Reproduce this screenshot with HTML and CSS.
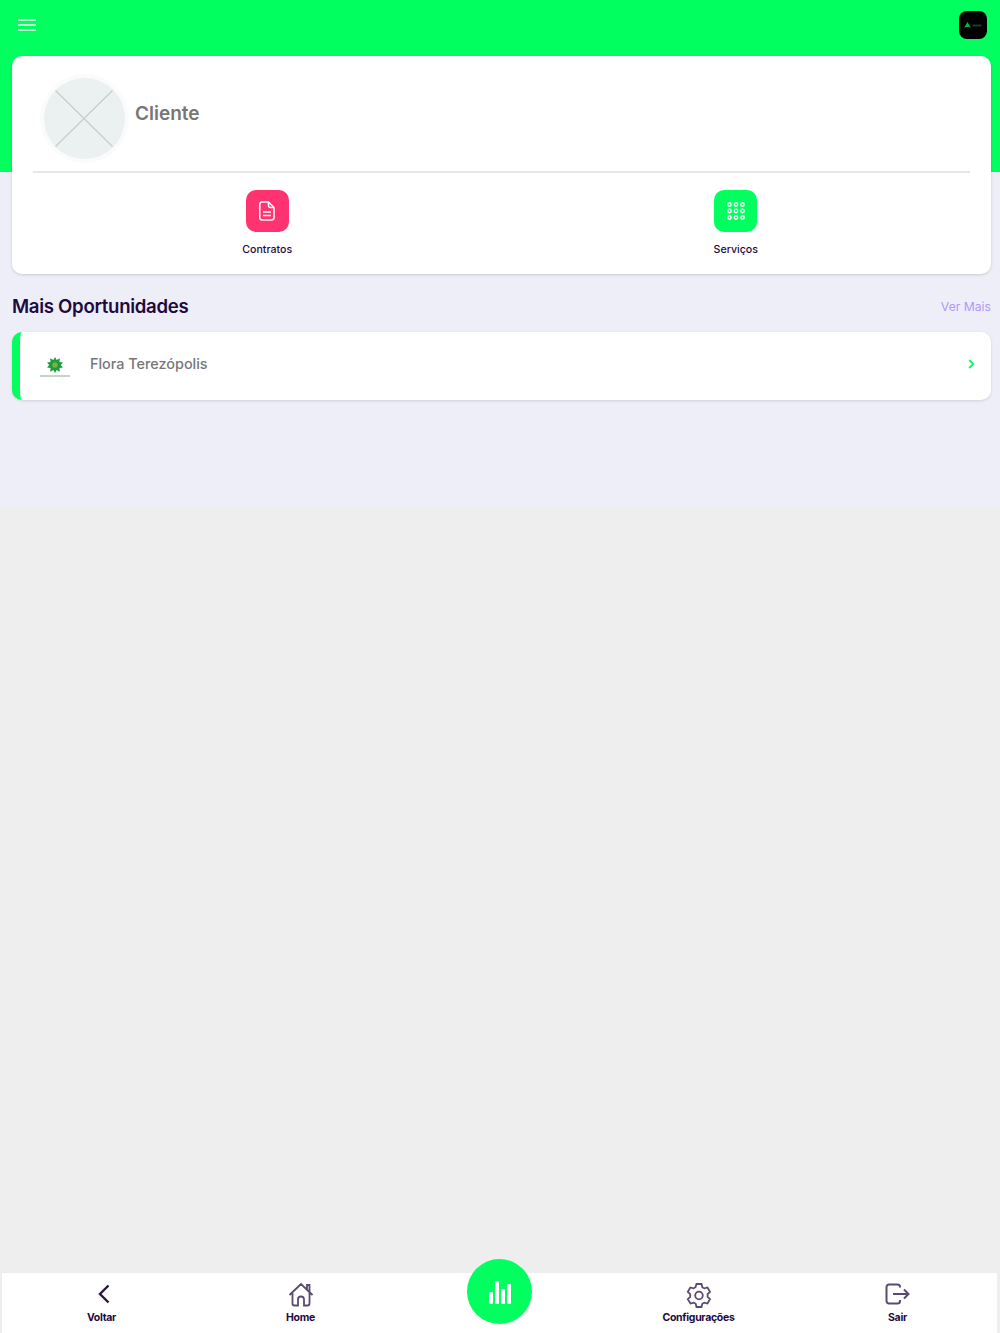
FILE: index.html
```html
<!DOCTYPE html>
<html lang="pt-BR">
<head>
  <meta charset="UTF-8">
  <meta name="viewport" content="width=device-width, initial-scale=1.0">
  <title>Cliente</title>
  <link rel="stylesheet" href="styles.css">
</head>
<body>
  <div class="app">
    <div class="content">
      <header class="topbar">
        <svg class="menu-icon" width="18" height="12" viewBox="0 0 18 12">
          <path d="M0 1h18M0 6h18M0 11h18" stroke="#fff" stroke-width="1.6" fill="none"/>
        </svg>
        <div class="app-logo">
          <svg width="20" height="8" viewBox="0 0 20 8">
            <path d="M1 7l3.500-6 3.500 6-2-1h-3z" fill="#0fae4a"/>
            <path d="M9.500 4.500h9" stroke="#12402a" stroke-width="2" fill="none"/>
          </svg>
        </div>
      </header>

      <!-- perfil -->
      <section class="profile-card">
        <div class="profile">
          <div class="avatar">
            <svg width="81" height="81" viewBox="0 0 81 81">
              <circle cx="40.5" cy="40.5" r="40.5" fill="#ebf0f0"/>
              <path d="M11.500 12.500l57 56M68.500 12.500l-57 56" stroke="#c8cccc" stroke-width="1.2" fill="none"/>
            </svg>
          </div>
          <h2 class="profile-name">Cliente</h2>
        </div>
        <div class="shortcuts">
          <a class="shortcut">
            <span class="shortcut-icon pink">
              <svg width="16" height="20" viewBox="0 0 16 20" fill="none" stroke="#fff" stroke-width="1.5">
                <path d="M3 1h6.500L15 6.500V16.500a2.500 2.500 0 0 1-2.500 2.500h-9.500A2.500 2.500 0 0 1 .8 16.500V3.500A2.500 2.500 0 0 1 3 1z"/>
                <path d="M9.500 1v3.500a2 2 0 0 0 2 2H15M4 11h8M4 14.500h8"/>
              </svg>
            </span>
            <span class="shortcut-label">Contratos</span>
          </a>
          <a class="shortcut">
            <span class="shortcut-icon green">
              <svg width="18" height="18" viewBox="0 0 18 18" fill="none" stroke="#fff" stroke-width="1.4">
                <circle cx="2.500" cy="2.500" r="1.700"/><circle cx="9" cy="2.500" r="1.700"/><circle cx="15.500" cy="2.500" r="1.700"/>
                <circle cx="2.500" cy="9" r="1.700"/><circle cx="9" cy="9" r="1.700"/><circle cx="15.500" cy="9" r="1.700"/>
                <circle cx="2.500" cy="15.500" r="1.700"/><circle cx="9" cy="15.500" r="1.700"/><circle cx="15.500" cy="15.500" r="1.700"/>
              </svg>
            </span>
            <span class="shortcut-label">Serviços</span>
          </a>
        </div>
      </section>

      <!-- oportunidades -->
      <div class="section-head">
        <h3>Mais Oportunidades</h3>
        <a class="see-more">Ver Mais</a>
      </div>
      <div class="opportunity">
        <div class="flora-logo">
          <svg width="16" height="16" viewBox="0 0 18 18">
            <path d="M9 0l1.800 3.500L14.500 1.500 14 5.500l4 .8L15.500 9l2.500 2.700-4 .8.500 4-3.700-2L9 18l-1.800-3.500-3.700 2 .5-4-4-.8L2.500 9 0 6.300l4-.8-.5-4 3.700 2z" fill="#1f9a3c"/>
            <circle cx="9" cy="9" r="3" fill="#7cb342"/>
          </svg>
          <span class="flora-line"></span>
        </div>
        <span class="opportunity-name">Flora Terezópolis</span>
        <svg class="chevron" width="7" height="10" viewBox="0 0 7 10">
          <path d="M1.200 1l4 4-4 4" stroke="#00ff5f" stroke-width="1.800" fill="none"/>
        </svg>
      </div>
    </div>

    <nav class="bottom-nav">
      <a class="nav-item">
        <svg width="26" height="26" viewBox="0 0 26 26" fill="none" stroke="#2a1540" stroke-width="2.400">
          <path d="M19.500 3.500L11 12l8.500 8.500"/>
        </svg>
        <span>Voltar</span>
      </a>
      <a class="nav-item">
        <svg width="26" height="26" viewBox="0 0 26 26" fill="none" stroke="#5a4a70" stroke-width="1.800">
          <path d="M1.500 13L13 2l11.500 11M19 7V3h2.500v6.500M4.500 11v10.500a2 2 0 0 0 2 2H10v-6a3 3 0 0 1 6 0v6h3.500a2 2 0 0 0 2-2V11"/>
        </svg>
        <span>Home</span>
      </a>
      <div class="nav-item nav-center">
        <span class="fab">
          <svg width="22" height="24" viewBox="0 0 22 24" fill="#fff">
            <rect x="0" y="12" width="4" height="12" rx="1"/>
            <rect x="6" y="1" width="4" height="23" rx="1"/>
            <rect x="12" y="9" width="4" height="15" rx="1"/>
            <rect x="18" y="4" width="4" height="20" rx="1"/>
          </svg>
        </span>
      </div>
      <a class="nav-item">
        <svg width="26" height="26" viewBox="0 0 26 26" fill="none" stroke="#5a4a70" stroke-width="1.800">
          <path d="M10.500 2h5l.8 3.200 2 1.200 3.200-.9 2.500 4.300-2.400 2.300v2.800l2.400 2.300-2.500 4.300-3.200-.9-2 1.200-.8 3.200h-5l-.8-3.200-2-1.200-3.200.9L1.800 17.200l2.400-2.300v-2.800L1.800 9.800l2.500-4.300 3.200.9 2-1.200z"/>
          <circle cx="13" cy="13.500" r="3.800"/>
        </svg>
        <span>Configurações</span>
      </a>
      <a class="nav-item">
        <svg width="26" height="26" viewBox="0 0 26 26" fill="none" stroke="#5a4a70" stroke-width="2">
          <path d="M15 5.500V5a2.500 2.500 0 0 0-2.500-2.500H4A2.500 2.500 0 0 0 1.500 5v14A2.500 2.500 0 0 0 4 21.500h8.500A2.500 2.500 0 0 0 15 19v-1"/>
          <path d="M8 12h15M19 7.500l4.500 4.500-4.500 4.500"/>
        </svg>
        <span>Sair</span>
      </a>
    </nav>
  </div>
</body>
</html>
```

FILE: styles.css
```css
body {
  margin: 0;
  font-family: Inter, "Open Sans", Arial, sans-serif;
  color: #1e0a3c;
}

a {
  color: inherit;
  text-decoration: none;
}

h2, h3 {
  margin: 0;
}

.app {
  display: flex;
  flex-direction: column;
  height: 1333px;
  overflow: hidden;
  background-color: #eeeeee;
}

.content {
  height: 508px;
  padding: 0 9px 0 12px;
  background: linear-gradient(#00ff5f 172px, #eeeef8 172px);
}

.topbar {
  display: flex;
  justify-content: space-between;
  align-items: center;
  height: 56px;
  padding: 0 4px 8px 6px;
  box-sizing: border-box;
}

.menu-icon {
  margin-top: 2px;
}

.app-logo {
  display: flex;
  align-items: center;
  justify-content: center;
  width: 28px;
  height: 28px;
  margin-top: 1px;
  border-radius: 8px;
  background-color: #000;
}

.profile-card {
  height: 218px;
  padding: 0 21px;
  box-sizing: border-box;
  background-color: #fff;
  border-radius: 10px;
  box-shadow: 0 1px 3px rgba(0, 0, 0, 0.15);
}

.profile {
  display: flex;
  align-items: center;
  height: 115px;
  border-bottom: 2px solid #e6e6ec;
}

.avatar {
  display: flex;
  width: 81px;
  height: 81px;
  margin: 9px 0 0 11px;
  border-radius: 50%;
  box-shadow: 0 0 0 4px #fbfbfb;
}

.profile-name {
  margin: 0 0 0 10px;
  font-size: 19px;
  font-weight: 600;
  color: #777;
}

.shortcuts {
  display: grid;
  grid-template-columns: 1fr 1fr;
  padding-top: 17px;
}

.shortcut {
  display: flex;
  flex-direction: column;
  align-items: center;
}

.shortcut-icon {
  display: flex;
  align-items: center;
  justify-content: center;
  width: 43px;
  height: 42px;
  border-radius: 10px;
}

.pink {
  background-color: #ff3370;
}

.green {
  background-color: #00ff5f;
}

.shortcut-label {
  margin-top: 11px;
  font-size: 10.6px;
  font-weight: 500;
  line-height: 14px;
}

.section-head {
  display: flex;
  justify-content: space-between;
  align-items: center;
  height: 58px;
  padding-top: 6px;
  box-sizing: border-box;
}

.section-head h3 {
  font-size: 18.6px;
  font-weight: 600;
  letter-spacing: -0.3px;
}

.see-more {
  font-size: 12.2px;
  color: #b197fc;
}

.opportunity {
  display: flex;
  align-items: center;
  height: 68px;
  padding-right: 16px;
  box-sizing: border-box;
  background-color: #fff;
  border-left: 8px solid #00ff5f;
  border-radius: 10px;
  box-shadow: 0 1px 3px rgba(0, 0, 0, 0.12);
}

.flora-logo {
  display: flex;
  flex-direction: column;
  align-items: center;
  gap: 2px;
  width: 32px;
  margin: 2px 19px 0 19px;
}

.flora-line {
  width: 30px;
  height: 2px;
  background-color: #c3d6c6;
}

.opportunity-name {
  flex: 1;
  margin-bottom: 6px;
  font-size: 14.4px;
  font-weight: 500;
  color: #777;
}

.chevron {
  margin-bottom: 4px;
}

.bottom-nav {
  display: flex;
  height: 60px;
  margin: auto 3px 0 2px;
  background-color: #fff;
}

.nav-item {
  flex: 1;
  display: flex;
  flex-direction: column;
  align-items: center;
  padding-top: 9px;
  font-size: 10.5px;
  font-weight: 700;
  letter-spacing: -0.3px;
  line-height: 20px;
}

.nav-item svg {
  display: block;
}

.nav-center {
  padding-top: 0;
}

.fab {
  display: flex;
  align-items: center;
  justify-content: center;
  width: 65px;
  height: 65px;
  margin-top: -14px;
  border-radius: 50%;
  background-color: #00ff5f;
}
```
